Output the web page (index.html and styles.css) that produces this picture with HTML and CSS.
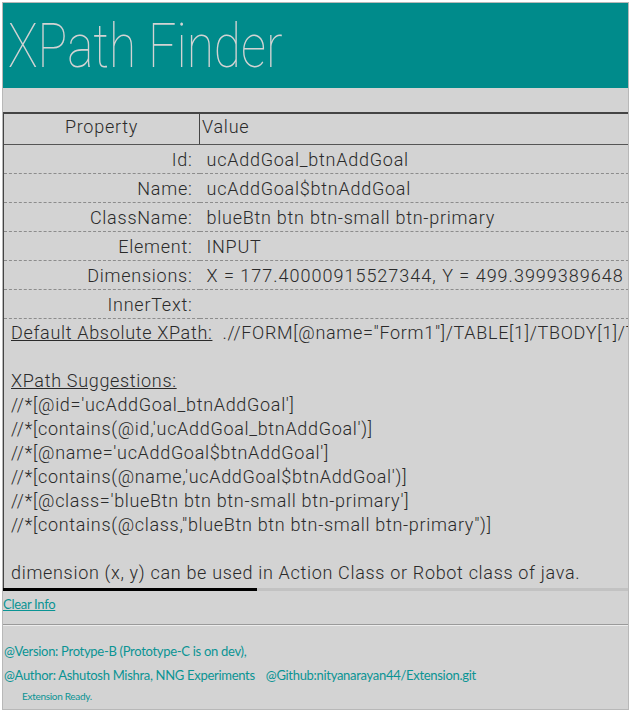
FILE: index.html
```html
<!DOCTYPE html>
<html>
<head>
<meta charset="utf-8">
<title>XPath Finder</title>
<link rel="stylesheet" href="styles.css">
</head>
<body>
<div class="frame">
  <header class="title"><span class="title-text">XPath Finder</span></header>
  <section class="info">
    <table class="props">
      <thead>
        <tr><th class="col-prop">Property</th><th class="col-val">Value</th></tr>
      </thead>
      <tbody>
        <tr><td class="lbl">Id:</td><td class="val">ucAddGoal_btnAddGoal</td></tr>
        <tr><td class="lbl">Name:</td><td class="val">ucAddGoal$btnAddGoal</td></tr>
        <tr><td class="lbl">ClassName:</td><td class="val">blueBtn btn btn-small btn-primary</td></tr>
        <tr><td class="lbl">Element:</td><td class="val">INPUT</td></tr>
        <tr><td class="lbl">Dimensions:</td><td class="val num">X = 177.40000915527344, Y = 499.3999389648</td></tr>
        <tr><td class="lbl">InnerText:</td><td class="val"></td></tr>
      </tbody>
    </table>
    <div class="xpath">
      <div><span class="heading">Default Absolute XPath:</span>&nbsp; .//FORM[@name="Form1"]/TABLE[1]/TBODY[1]/TR[1]/TD[1]/INPUT[1]</div>
      <div class="blank"></div>
      <div><span class="heading">XPath Suggestions:</span></div>
      <div>//*[@id='ucAddGoal_btnAddGoal']</div>
      <div>//*[contains(@id,'ucAddGoal_btnAddGoal')]</div>
      <div>//*[@name='ucAddGoal$btnAddGoal']</div>
      <div>//*[contains(@name,'ucAddGoal$btnAddGoal')]</div>
      <div>//*[@class='blueBtn btn btn-small btn-primary']</div>
      <div>//*[contains(@class,"blueBtn btn btn-small btn-primary")]</div>
      <div class="blank"></div>
      <div>dimension (x, y) can be used in Action Class or Robot class of java.</div>
    </div>
  </section>
  <div class="bar"><span class="bar-fill"></span></div>
  <div class="clear-row"><a class="clear" href="#">Clear Info</a></div>
  <hr class="sep">
  <footer class="foot">
    <div class="foot-line">@Version: Protype-B (Prototype-C is on dev),</div>
    <div class="foot-line">@Author: Ashutosh Mishra, NNG Experiments <span class="gh">@Github:nityanarayan44/Extension.git</span></div>
    <div class="status">Extension Ready.</div>
  </footer>
</div>
</body>
</html>
```

FILE: styles.css
```css
html, body {
  margin: 0;
  padding: 0;
  background: #ffffff;
}

.frame {
  margin: 2px 0 0 2px;
  width: 625px;
  height: 706px;
  border: 1px solid #b8b8b8;
  background: #d3d3d3;
  overflow: hidden;
}

.title {
  height: 85px;
  background: #008b8b;
  color: #d3d3d3;
  font-family: Roboto, sans-serif;
  font-weight: 100;
  font-size: 62px;
  line-height: 85px;
  padding-left: 5px;
  white-space: nowrap;
}

.title-text {
  display: inline-block;
  transform: scaleX(0.8);
  transform-origin: left center;
}

.info {
  margin-top: 24px;
  border-left: 1px solid #444;
  font-family: Roboto, sans-serif;
  font-weight: 300;
  font-size: 18px;
  letter-spacing: 0.75px;
  color: #2a2a2a;
  white-space: nowrap;
}

.props {
  border-collapse: collapse;
  border-top: 2px solid #444;
  width: 640px;
}

.props th {
  font-weight: 300;
  height: 30px;
  padding: 0;
  line-height: 26px;
  vertical-align: top;
  border-right: 1px solid #444;
  border-bottom: 1px solid #555;
}

.col-prop {
  width: 195px;
  text-align: center;
}

.col-val {
  text-align: left;
  padding-left: 2px !important;
}

.props td {
  height: 28px;
  padding: 0;
  border-bottom: 1px dashed #8c8c8c;
}

.lbl {
  text-align: right;
  padding-right: 7px !important;
}

.val {
  padding-left: 7px !important;
}

.num {
  letter-spacing: 1px;
}

.xpath {
  padding: 2px 0 3px 7px;
  line-height: 24px;
  letter-spacing: 0.68px;
}

.blank {
  height: 24px;
}

.heading {
  text-decoration: underline;
}

.bar {
  display: flex;
  height: 3px;
  background: #c2c2c2;
}

.bar-fill {
  width: 254px;
  background: #000;
}

.clear-row {
  margin-top: 4px;
  font-family: Lato, sans-serif;
  font-size: 13px;
  line-height: 18px;
  letter-spacing: -0.3px;
}

.clear {
  color: #0a9494;
}

.sep {
  margin: 11px 0 0 0;
  border: 0;
  border-top: 1px solid #9a9a9a;
  border-bottom: 1px solid #ececec;
}

.foot {
  padding: 13px 0 0 1px;
  font-family: Lato, sans-serif;
  font-size: 13px;
  letter-spacing: -0.3px;
  color: #0a9494;
  white-space: nowrap;
}

.foot-line {
  line-height: 24px;
}

.gh {
  margin-left: 8px;
}

.status {
  padding-left: 18px;
  font-size: 10px;
  line-height: 18px;
}
```
